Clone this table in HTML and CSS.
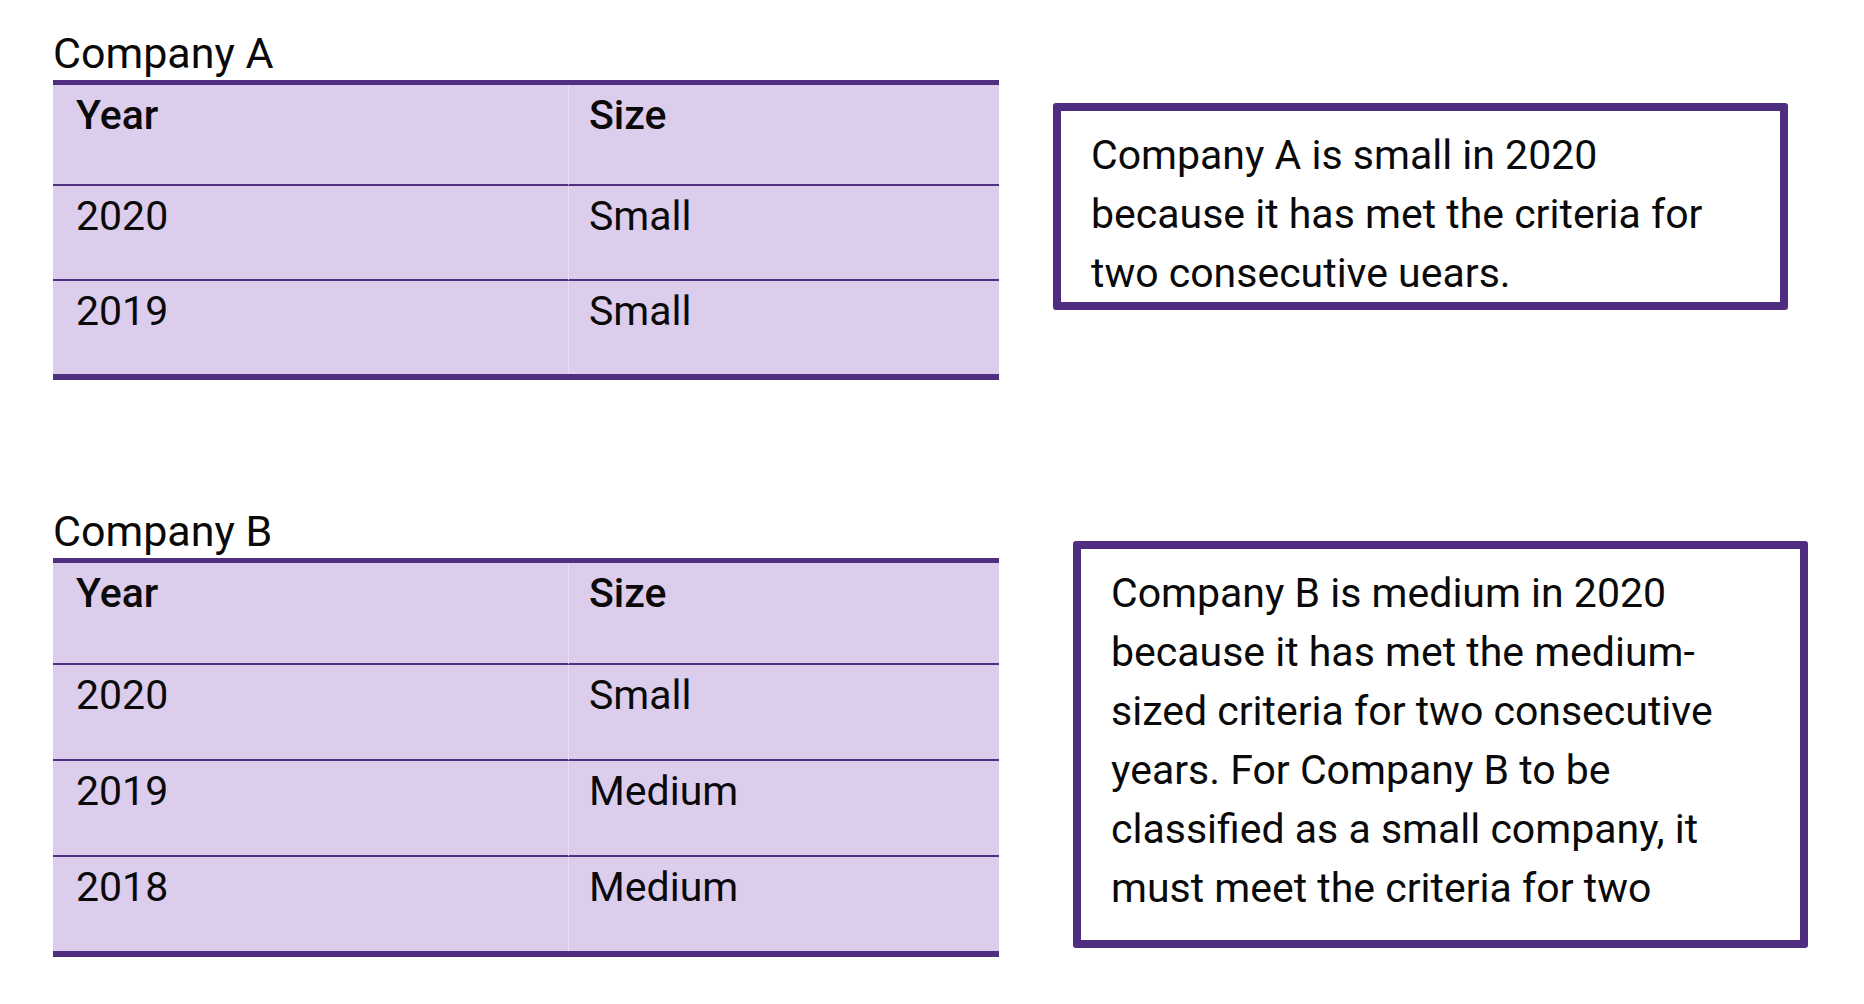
FILE: index.html
```html
<!DOCTYPE html>
<html lang="en">
<head>
<meta charset="utf-8">
<title>Company size</title>
<link rel="stylesheet" href="styles.css">
</head>
<body>
<main class="page">
  <section class="row row-a">
    <div class="company">
      <h2 class="company-title">Company A</h2>
      <div class="tbl">
        <div class="cell head first">Year</div>
        <div class="cell head second">Size</div>
        <div class="cell first">2020</div>
        <div class="cell second">Small</div>
        <div class="cell first last">2019</div>
        <div class="cell second last">Small</div>
      </div>
    </div>
    <div class="note note-a">
      <p class="note-text">Company A is small in 2020<br>because it has met the criteria for<br>two consecutive uears.</p>
    </div>
  </section>

  <section class="row row-b">
    <div class="company">
      <h2 class="company-title">Company B</h2>
      <div class="tbl tbl-b">
        <div class="cell head first">Year</div>
        <div class="cell head second">Size</div>
        <div class="cell first">2020</div>
        <div class="cell second">Small</div>
        <div class="cell first">2019</div>
        <div class="cell second">Medium</div>
        <div class="cell first last">2018</div>
        <div class="cell second last">Medium</div>
      </div>
    </div>
    <div class="note note-b">
      <p class="note-text">Company B is medium in 2020<br>because it has met the medium-<br>sized criteria for two consecutive<br>years. For Company B to be<br>classified as a small company, it<br>must meet the criteria for two</p>
    </div>
  </section>
</main>
</body>
</html>
```

FILE: styles.css
```css
html, body {
  margin: 0;
  padding: 0;
  background: #ffffff;
}

body {
  font-family: Roboto, "Liberation Sans", Arial, sans-serif;
  color: #0a0a0a;
  width: 1864px;
  height: 1004px;
  overflow: hidden;
}

.page {
  padding: 29px 0 0 53px;
}

.row {
  display: flex;
  align-items: flex-start;
}

.row-b {
  margin-top: 127px;
}

.company {
  width: 946px;
  flex: none;
}

.company-title {
  margin: 0 0 3px 0;
  font-size: 43px;
  line-height: 48px;
  font-weight: 400;
}

.tbl {
  display: grid;
  grid-template-columns: 515px 431px;
  background: #dccded;
  border-top: 5px solid #512f80;
  border-bottom: 6px solid #512f80;
}

.cell {
  font-size: 41px;
  line-height: 48px;
  font-weight: 400;
  padding: 6px 0 39px 23px;
  border-bottom: 2px solid #512f80;
}

.cell.second {
  padding-left: 20px;
  border-left: 1px solid #e7ddf4;
}

.cell.head {
  font-weight: 500;
  padding-bottom: 45px;
}

.tbl-b .cell {
  padding-bottom: 40px;
}

.tbl-b .cell.head {
  padding-bottom: 46px;
}

.cell.last {
  border-bottom: none;
}

.note {
  flex: none;
  box-sizing: border-box;
  width: 735px;
  border: 8px solid #4f2d80;
  border-radius: 3px;
  padding: 15px 20px 0 30px;
  overflow: hidden;
  background: #ffffff;
}

.note-a {
  margin: 74px 0 0 54px;
  height: 207px;
}

.note-b {
  margin: 34px 0 0 74px;
  height: 407px;
}

.note-text {
  margin: 0;
  font-size: 41px;
  line-height: 59px;
  white-space: nowrap;
}
```
